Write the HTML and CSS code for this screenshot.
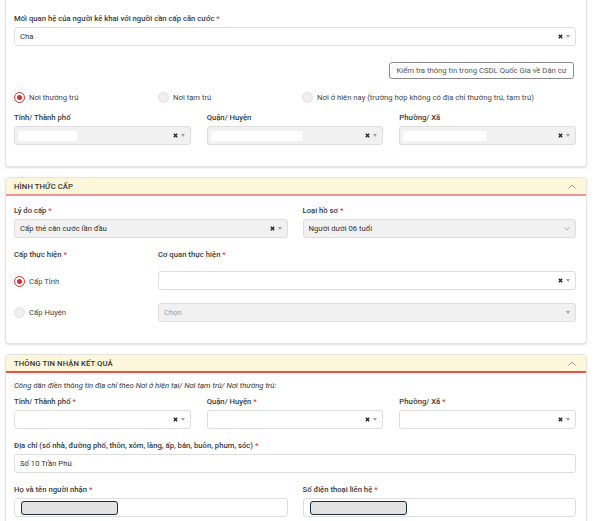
FILE: index.html
```html
<!DOCTYPE html>
<html lang="vi">
<head>
<meta charset="utf-8">
<title>Form</title>
<link rel="stylesheet" href="styles.css">
</head>
<body>
<div class="page">

  <section class="card card-first">
    <div class="card-body">
      <div class="field">
        <div class="lbl">Mối quan hệ của người kê khai với người cần cấp căn cước <span class="req">*</span></div>
        <div class="select">
          <span class="val">Cha</span>
          <span class="icons">
            <svg class="clear" viewBox="0 0 6 6" width="5" height="5"><path d="M1 1L5 5M5 1L1 5"/></svg>
            <svg class="caret" viewBox="0 0 4 3" width="4" height="3"><path d="M0 0H4L2 3Z"/></svg>
          </span>
        </div>
      </div>

      <div class="btn-row">
        <button class="btn-check" type="button">Kiểm tra thông tin trong CSDL Quốc Gia về Dân cư</button>
      </div>

      <div class="radio-row">
        <label class="radio"><span class="dot checked"></span>Nơi thường trú</label>
        <label class="radio"><span class="dot"></span>Nơi tạm trú</label>
        <label class="radio"><span class="dot"></span>Nơi ở hiện nay (trường hợp không có địa chỉ thường trú, tạm trú)</label>
      </div>

      <div class="grid3 mt10">
        <div class="field">
          <div class="lbl">Tỉnh/ Thành phố</div>
          <div class="select disabled">
            <span class="redact" style="width:59px"></span>
            <span class="icons">
              <svg class="clear" viewBox="0 0 6 6" width="5" height="5"><path d="M1 1L5 5M5 1L1 5"/></svg>
              <svg class="caret" viewBox="0 0 4 3" width="4" height="3"><path d="M0 0H4L2 3Z"/></svg>
            </span>
          </div>
        </div>
        <div class="field">
          <div class="lbl">Quận/ Huyện</div>
          <div class="select disabled">
            <span class="redact" style="width:92px"></span>
            <span class="icons">
              <svg class="clear" viewBox="0 0 6 6" width="5" height="5"><path d="M1 1L5 5M5 1L1 5"/></svg>
              <svg class="caret" viewBox="0 0 4 3" width="4" height="3"><path d="M0 0H4L2 3Z"/></svg>
            </span>
          </div>
        </div>
        <div class="field">
          <div class="lbl">Phường/ Xã</div>
          <div class="select disabled">
            <span class="redact" style="width:84px"></span>
            <span class="icons">
              <svg class="clear" viewBox="0 0 6 6" width="5" height="5"><path d="M1 1L5 5M5 1L1 5"/></svg>
              <svg class="caret" viewBox="0 0 4 3" width="4" height="3"><path d="M0 0H4L2 3Z"/></svg>
            </span>
          </div>
        </div>
      </div>
    </div>
  </section>

  <section class="card">
    <header class="card-head head-soft">
      <span class="title">HÌNH THỨC CẤP</span>
      <svg class="chev" viewBox="0 0 8 5" width="8" height="5"><path d="M0.5 4.5L4 1L7.5 4.5"/></svg>
    </header>
    <div class="card-body body-2">
      <div class="grid2">
        <div class="field">
          <div class="lbl">Lý do cấp <span class="req">*</span></div>
          <div class="select disabled">
            <span class="val">Cấp thẻ căn cước lần đầu</span>
            <span class="icons">
              <svg class="clear" viewBox="0 0 6 6" width="5" height="5"><path d="M1 1L5 5M5 1L1 5"/></svg>
              <svg class="caret" viewBox="0 0 4 3" width="4" height="3"><path d="M0 0H4L2 3Z"/></svg>
            </span>
          </div>
        </div>
        <div class="field">
          <div class="lbl">Loại hồ sơ <span class="req">*</span></div>
          <div class="select disabled">
            <span class="val">Người dưới 06 tuổi</span>
            <span class="icons">
              <svg class="chev-down" viewBox="0 0 6 4" width="6" height="4"><path d="M0.5 0.5L3 3L5.5 0.5"/></svg>
            </span>
          </div>
        </div>
      </div>

      <div class="cap-grid">
        <div class="lbl">Cấp thực hiện <span class="req">*</span></div>
        <div class="lbl">Cơ quan thực hiện <span class="req">*</span></div>

        <label class="radio cap-radio r1"><span class="dot checked"></span>Cấp Tỉnh</label>
        <div class="select r1">
          <span class="val"></span>
          <span class="icons">
            <svg class="clear" viewBox="0 0 6 6" width="5" height="5"><path d="M1 1L5 5M5 1L1 5"/></svg>
            <svg class="caret" viewBox="0 0 4 3" width="4" height="3"><path d="M0 0H4L2 3Z"/></svg>
          </span>
        </div>

        <label class="radio cap-radio r2"><span class="dot"></span>Cấp Huyện</label>
        <div class="select disabled r2">
          <span class="val muted">Chọn</span>
          <span class="icons">
            <svg class="caret" viewBox="0 0 4 3" width="4" height="3"><path d="M0 0H4L2 3Z"/></svg>
          </span>
        </div>
      </div>
    </div>
  </section>

  <section class="card card-last">
    <header class="card-head head-red">
      <span class="title">THÔNG TIN NHẬN KẾT QUẢ</span>
      <svg class="chev" viewBox="0 0 8 5" width="8" height="5"><path d="M0.5 4.5L4 1L7.5 4.5"/></svg>
    </header>
    <div class="card-body body-3">
      <div class="note">Công dân điền thông tin địa chỉ theo Nơi ở hiện tại/ Nơi tạm trú/ Nơi thường trú:</div>

      <div class="grid3 mt6">
        <div class="field">
          <div class="lbl">Tỉnh/ Thành phố <span class="req">*</span></div>
          <div class="select">
            <span class="val"></span>
            <span class="icons">
              <svg class="clear" viewBox="0 0 6 6" width="5" height="5"><path d="M1 1L5 5M5 1L1 5"/></svg>
              <svg class="caret" viewBox="0 0 4 3" width="4" height="3"><path d="M0 0H4L2 3Z"/></svg>
            </span>
          </div>
        </div>
        <div class="field">
          <div class="lbl">Quận/ Huyện <span class="req">*</span></div>
          <div class="select">
            <span class="val"></span>
            <span class="icons">
              <svg class="clear" viewBox="0 0 6 6" width="5" height="5"><path d="M1 1L5 5M5 1L1 5"/></svg>
              <svg class="caret" viewBox="0 0 4 3" width="4" height="3"><path d="M0 0H4L2 3Z"/></svg>
            </span>
          </div>
        </div>
        <div class="field">
          <div class="lbl">Phường/ Xã <span class="req">*</span></div>
          <div class="select">
            <span class="val"></span>
            <span class="icons">
              <svg class="clear" viewBox="0 0 6 6" width="5" height="5"><path d="M1 1L5 5M5 1L1 5"/></svg>
              <svg class="caret" viewBox="0 0 4 3" width="4" height="3"><path d="M0 0H4L2 3Z"/></svg>
            </span>
          </div>
        </div>
      </div>

      <div class="field mt12">
        <div class="lbl">Địa chỉ (số nhà, đường phố, thôn, xóm, làng, ấp, bản, buôn, phum, sóc) <span class="req">*</span></div>
        <div class="input"><span class="val">Số 10 Trần Phú</span></div>
      </div>

      <div class="grid2 mt12">
        <div class="field">
          <div class="lbl">Họ và tên người nhận <span class="req">*</span></div>
          <div class="input"><span class="mask"></span></div>
        </div>
        <div class="field">
          <div class="lbl">Số điện thoại liên hệ <span class="req">*</span></div>
          <div class="input"><span class="mask"></span></div>
        </div>
      </div>
    </div>
  </section>

</div>
</body>
</html>
```

FILE: styles.css
```css
* { box-sizing: border-box; }

html, body {
  margin: 0;
  padding: 0;
  background: #ffffff;
}

body {
  font-family: Roboto, "Noto Sans", "Liberation Sans", sans-serif;
  font-size: 7.7px;
  color: #333333;
  overflow: hidden;
}

.page {
  width: 582px;
  margin-left: 5px;
}

.card {
  background: #ffffff;
  border: 1px solid #e4e4e4;
  border-radius: 4px;
  box-shadow: 0 1px 2px rgba(0, 0, 0, 0.14);
  margin-bottom: 10px;
}

.card-first {
  border-top: none;
  border-top-left-radius: 0;
  border-top-right-radius: 0;
}

.card-body {
  padding: 14px 10px 21px 8px;
}

.body-2 { padding-top: 10px; }
.body-3 { padding-top: 8px; }

.card-head {
  height: 18px;
  background: #fcf6db;
  display: flex;
  align-items: center;
  justify-content: space-between;
  padding: 0 10px 0 8px;
  border-top-left-radius: 3px;
  border-top-right-radius: 3px;
}

.head-soft { border-bottom: 2px solid #e8968f; }
.head-red { border-bottom: 2px solid #e8524a; }

.title {
  font-weight: 500;
  color: #333;
  letter-spacing: 0.1px;
}

.chev {
  fill: none;
  stroke: #9a9a9a;
  stroke-width: 1;
}

.field { display: flex; flex-direction: column; }

.lbl {
  line-height: 10px;
  height: 10px;
  margin-bottom: 3px;
  color: #3a3a3a;
  font-weight: 500;
  white-space: nowrap;
}

.req { color: #e53935; }

.select, .input {
  height: 19px;
  border: 1px solid #dedede;
  border-radius: 3px;
  background: #ffffff;
  display: flex;
  align-items: center;
  padding: 0 5px 0 5px;
}

.select.disabled { background: #f1f1f1; }

.val {
  flex: 1;
  white-space: nowrap;
  overflow: hidden;
  color: #333;
}

.val.muted { color: #9a9a9a; }

.icons {
  display: flex;
  align-items: center;
  gap: 3px;
  margin-left: auto;
}

.clear {
  stroke: #222;
  stroke-width: 1.6;
  fill: none;
}

.caret { fill: #a0a0a0; }

.chev-down {
  fill: none;
  stroke: #999;
  stroke-width: 0.8;
}

.redact {
  display: block;
  height: 10px;
  background: #ffffff;
  margin-left: -2px;
}

.btn-row {
  display: flex;
  justify-content: flex-end;
  margin-top: 16px;
  padding-right: 2px;
}

.btn-check {
  height: 17px;
  width: 185px;
  padding: 0;
  border: 1px solid #8a8a8a;
  border-radius: 3px;
  background: #ffffff;
  color: #555;
  font-family: inherit;
  font-size: 7.7px;
  white-space: nowrap;
}

.radio-row {
  display: grid;
  grid-template-columns: 144px 144px 1fr;
  margin-top: 12px;
  height: 12px;
}

.radio {
  display: flex;
  align-items: center;
  gap: 4px;
  color: #444;
  white-space: nowrap;
}

.dot {
  width: 11px;
  height: 11px;
  border-radius: 50%;
  border: 1px solid #e2e2e2;
  background: #efefef;
  flex: none;
  position: relative;
}

.dot.checked {
  border: 1px solid #d9302a;
  background: #fff;
}

.dot.checked::after {
  content: "";
  position: absolute;
  left: 2px;
  top: 2px;
  width: 5px;
  height: 5px;
  border-radius: 50%;
  background: #d9302a;
}

.grid3 {
  display: grid;
  grid-template-columns: 1fr 1fr 1fr;
  column-gap: 16px;
}

.grid2 {
  display: grid;
  grid-template-columns: 1fr 1fr;
  column-gap: 15px;
}

.mt6 { margin-top: 6px; }
.mt10 { margin-top: 10px; }
.mt12 { margin-top: 12px; }

.cap-grid {
  display: grid;
  grid-template-columns: 144px 1fr;
  grid-template-rows: 10px 19px 19px;
  row-gap: 12px;
  margin-top: 12px;
}

.cap-grid .lbl { margin-bottom: 0; }
.cap-grid .r1 { margin-top: -1px; }

.note {
  font-style: italic;
  line-height: 10px;
  color: #333;
}

.mask {
  display: block;
  width: 97px;
  height: 14px;
  margin-left: 1px;
  background: #e2e2e2;
  border: 1px solid #1f2a3a;
  border-radius: 3px;
}
```
